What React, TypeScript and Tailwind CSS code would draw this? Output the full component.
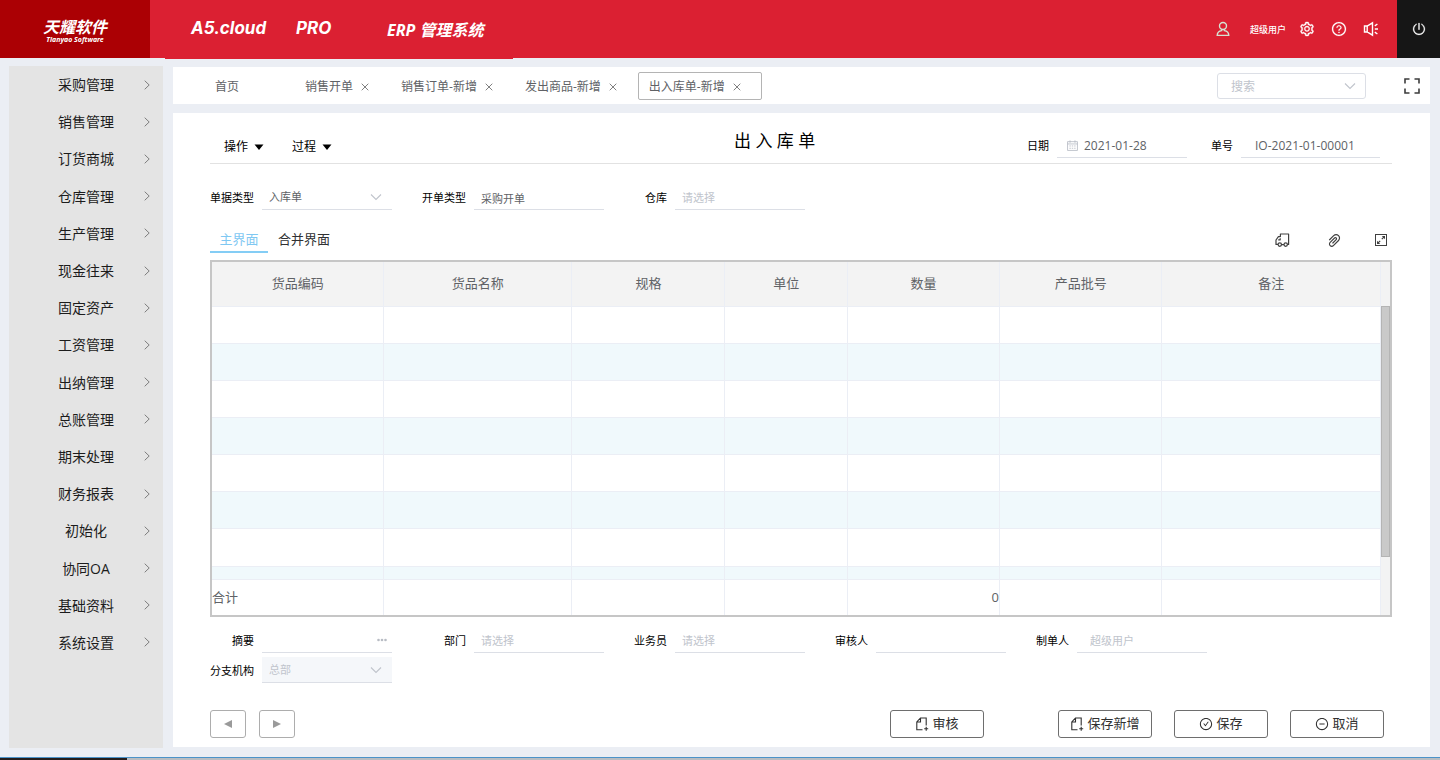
import type { ReactNode } from "react";
import {
  AiOutlineCheckCircle,
  AiOutlineMinusCircle,
  AiOutlinePaperClip,
  AiOutlinePoweroff,
  AiOutlineQuestionCircle,
  AiOutlineSetting,
} from "react-icons/ai";

const menuItems = [
  "采购管理",
  "销售管理",
  "订货商城",
  "仓库管理",
  "生产管理",
  "现金往来",
  "固定资产",
  "工资管理",
  "出纳管理",
  "总账管理",
  "期末处理",
  "财务报表",
  "初始化",
  "协同OA",
  "基础资料",
  "系统设置",
];

const openTabs = ["销售开单", "销售订单-新增", "发出商品-新增", "出入库单-新增"];

const columns = [
  { name: "货品编码", width: "w-[14.7%]" },
  { name: "货品名称", width: "w-[16.1%]" },
  { name: "规格", width: "w-[13.1%]" },
  { name: "单位", width: "w-[10.5%]" },
  { name: "数量", width: "w-[13%]" },
  { name: "产品批号", width: "w-[13.9%]" },
  { name: "备注", width: "" },
];

function Chevron({ className }: { className: string }) {
  return (
    <svg viewBox="0 0 12 12" className={className} fill="none" stroke="currentColor" strokeWidth="1.1" aria-hidden="true">
      <path d="M1 3.5 6 8.5 11 3.5" />
    </svg>
  );
}

function ArrowRight() {
  return (
    <svg viewBox="0 0 6 10" className="h-[10px] w-[6px] text-[#7d7d7d]" fill="none" stroke="currentColor" aria-hidden="true">
      <path d="M0.7 0.7 5.2 5 0.7 9.3" />
    </svg>
  );
}

function CloseIcon() {
  return (
    <svg viewBox="0 0 8 8" className="size-2 text-[#808080]" fill="none" stroke="currentColor" aria-hidden="true">
      <path d="M0.7 0.7 7.3 7.3M7.3 0.7 0.7 7.3" />
    </svg>
  );
}

function Triangle({ points, className }: { points: string; className: string }) {
  return (
    <svg viewBox="0 0 10 10" className={className} fill="currentColor" aria-hidden="true">
      <polygon points={points} />
    </svg>
  );
}

function UserIcon() {
  return (
    <svg viewBox="0 0 14 16" className="h-4 w-[14px] text-[#d5e3d3]" fill="none" stroke="currentColor" strokeWidth="1.4" aria-hidden="true">
      <circle cx="7" cy="5" r="3.5" />
      <path d="M5.6 8.4V9.6C2.6 10 1.3 11.6 1.2 14.4H12.8C12.7 11.6 11.4 10 8.4 9.6V8.4" />
    </svg>
  );
}

function SpeakerIcon() {
  return (
    <svg viewBox="0 0 16 16" className="size-4" fill="none" stroke="currentColor" strokeWidth="1.4" aria-hidden="true">
      <path d="M1.5 5H4.2L9.5 1.8V14.2L4.2 11H1.5ZM4.2 5V11M11.8 8H15M11.8 4.8 14.4 3M11.8 11.2 14.4 13" />
    </svg>
  );
}

function DocumentAddIcon() {
  return (
    <svg viewBox="0 0 14 14" className="size-[14px]" fill="none" stroke="currentColor" strokeWidth="1.1" aria-hidden="true">
      <path d="M7.5 12.8H1.8V5L5.5 1H11.2V8.5M5.5 1V5H1.8M11.2 9.8V13.8M9.2 11.8H13.2" />
    </svg>
  );
}

function TruckIcon() {
  return (
    <svg viewBox="0 0 15 14" className="h-[14px] w-[15px]" fill="none" stroke="currentColor" strokeWidth="1.2" strokeLinejoin="round" aria-hidden="true">
      <path d="M3 11.4H1V7L3.4 3.6H5.4V1H13.6V11.4H12.4M6.6 11.6H9M3.2 6.8H5.2V5.2" />
      <circle cx="4.8" cy="11.6" r="1.7" />
      <circle cx="10.7" cy="11.6" r="1.7" />
    </svg>
  );
}

function ExpandBoxIcon() {
  return (
    <svg viewBox="0 0 12 12" className="size-3" fill="none" stroke="currentColor" strokeWidth="1" aria-hidden="true">
      <rect x="0.5" y="0.5" width="11" height="11" />
      <path d="M2.6 9.4 5.2 6.8M6.8 5.2 9.4 2.6" strokeWidth="1.2" />
      <path d="M6.8 2H10V5.2ZM2 6.8V10H5.2Z" fill="currentColor" stroke="none" />
    </svg>
  );
}

function FullscreenIcon() {
  return (
    <svg viewBox="0 0 16 16" className="size-4" fill="none" stroke="currentColor" strokeWidth="1.6" aria-hidden="true">
      <path d="M1 5.5V1H5.5M10.5 1H15V5.5M15 10.5V15H10.5M5.5 15H1V10.5" />
    </svg>
  );
}

function CalendarIcon() {
  return (
    <svg viewBox="0 0 12 12" className="size-[11px] text-[#b5bac4]" fill="none" stroke="currentColor" strokeWidth="0.9" aria-hidden="true">
      <path d="M0.6 1.8H11.4V11.4H0.6ZM0.6 4.3H11.4M3.3 0.4V3M8.7 0.4V3M2.6 6.5H4.2M5.2 6.5H6.8M7.8 6.5H9.4M2.6 9H4.2M5.2 9H6.8M7.8 9H9.4" />
    </svg>
  );
}

type FieldProps = {
  id: string;
  label: string;
  labelClass: string;
  children: ReactNode;
};

function Field({ id, label, labelClass, children }: FieldProps) {
  return (
    <div className="flex items-center gap-2">
      <label htmlFor={id} className={`pt-[2px] text-right whitespace-nowrap text-black ${labelClass}`}>
        {label}
      </label>
      {children}
    </div>
  );
}

const inputClass =
  "h-[26px] w-[130px] rounded-none border-b border-[#dcdfe6] bg-transparent px-[7px] pt-[2px] text-[#606266] outline-none placeholder:text-[#c0c4cc]";

function ActionButton({ icon, children }: { icon: ReactNode; children: ReactNode }) {
  return (
    <button
      type="button"
      className="flex h-7 w-[94px] items-center justify-center gap-[3px] rounded-[3px] border border-[#6e6e6e] bg-white text-[13px] text-[#303030]"
    >
      {icon}
      {children}
    </button>
  );
}

function Header() {
  return (
    <header className="flex h-[58px] bg-[#db2032] text-white">
      <div className="flex w-[150px] flex-col items-center justify-center bg-[#ab0004] pt-[5px] font-['Noto_Sans','Noto_Sans_CJK_SC',sans-serif] font-bold italic">
        <span className="text-[16px] leading-[16px]">天耀软件</span>
        <span className="text-[7px] leading-[9px]">Tianyao Software</span>
      </div>
      <div className="ml-[15px] flex h-[59px] w-[348px] items-center bg-[#db2032] pl-[26px] font-bold italic">
        <span className="w-[105px] pb-[2px] font-['Inter',sans-serif] text-[17px]">A5.cloud</span>
        <span className="w-[91px] pb-[2px] font-['Inter',sans-serif] text-[17px]">PRO</span>
        <span className="font-['Noto_Sans','Noto_Sans_CJK_SC',sans-serif] text-[16px] whitespace-nowrap">ERP 管理系统</span>
      </div>
      <div className="ml-auto flex items-center">
        <button type="button" aria-label="用户">
          <UserIcon />
        </button>
        <span className="mr-[13px] ml-5 pt-px text-[9px] font-medium">超级用户</span>
        <div className="mr-[18px] flex gap-4 pb-px">
          <button type="button" aria-label="设置">
            <AiOutlineSetting className="size-4" strokeWidth={24} />
          </button>
          <button type="button" aria-label="帮助">
            <AiOutlineQuestionCircle className="size-4" strokeWidth={12} />
          </button>
          <button type="button" aria-label="通知">
            <SpeakerIcon />
          </button>
        </div>
        <button type="button" aria-label="退出" className="flex h-full w-[43px] items-center justify-center bg-[#161616]">
          <AiOutlinePoweroff className="size-[14px]" strokeWidth={20} />
        </button>
      </div>
    </header>
  );
}

function Sidebar() {
  return (
    <nav className="w-[154px] shrink-0 bg-[#e4e4e4]">
      <ul className="grid h-[595px] auto-rows-fr text-[14px] text-[#1c1c1c]">
        {menuItems.map((item) => (
          <li key={item}>
            <a href="#" className="grid h-full grid-cols-[1fr_auto_1fr] items-center">
              <span />
              <span>{item}</span>
              <span className="flex justify-end pr-[13px]">
                <ArrowRight />
              </span>
            </a>
          </li>
        ))}
      </ul>
    </nav>
  );
}

function TabBar() {
  return (
    <div className="flex h-[37px] items-center bg-white pl-[31px] text-[12px] text-[#606266]">
      <a href="#" className="w-[90px] pt-[2px] pl-[11px]">
        首页
      </a>
      {openTabs.map((tab, index) => {
        const active = index === openTabs.length - 1;
        return (
          <div
            key={tab}
            className={`flex h-7 items-center gap-2 rounded-[2px] border pt-[2px] pr-5 pl-[10px] ${
              active ? "border-[#b4b4b4]" : "border-transparent"
            }`}
          >
            <a href="#" className="whitespace-nowrap">
              {tab}
            </a>
            <button type="button" aria-label={`关闭${tab}`}>
              <CloseIcon />
            </button>
          </div>
        );
      })}
      <div className="relative mr-[38px] ml-auto">
        <input
          aria-label="搜索"
          placeholder="搜索"
          className="h-[26px] w-[149px] rounded-[3px] border border-[#dcdfe6] bg-white px-[13px] pt-px outline-none placeholder:text-[#c0c4cc]"
        />
        <Chevron className="absolute top-[7px] right-[10px] size-3 text-[#c0c4cc]" />
      </div>
      <button type="button" aria-label="全屏" className="mr-[10px] text-[#3c3c3c]">
        <FullscreenIcon />
      </button>
    </div>
  );
}

function FormHeader() {
  return (
    <div className="flex h-[51px] items-center border-b border-[#e2e2e2] pt-[14px]">
      <div className="flex w-[524px] gap-7 pt-[3px] pl-[14px] text-[12px] text-black">
        <button type="button" className="flex items-center gap-[6px]">
          操作
          <Triangle points="0.5,2.5 9.5,2.5 5,8" className="size-[10px]" />
        </button>
        <button type="button" className="flex items-center gap-[6px]">
          过程
          <Triangle points="0.5,2.5 9.5,2.5 5,8" className="size-[10px]" />
        </button>
      </div>
      <h1 className="pb-2 text-[17px] whitespace-nowrap text-black">出 入 库 单</h1>
      <div className="mr-3 ml-auto flex gap-6 text-[11px]">
        <Field id="date" label="日期" labelClass="">
          <div className="flex h-[26px] w-[130px] items-center gap-[6px] border-b border-[#dcdfe6] pt-[2px] pl-[10px]">
            <CalendarIcon />
            <input id="date" defaultValue="2021-01-28" className="w-[90px] text-[12px] text-[#606266] outline-none" />
          </div>
        </Field>
        <Field id="number" label="单号" labelClass="">
          <input
            id="number"
            defaultValue="IO-2021-01-00001"
            className="h-[26px] w-[139px] border-b border-[#dcdfe6] pt-[2px] pl-[14px] text-[12px] text-[#606266] outline-none"
          />
        </Field>
      </div>
    </div>
  );
}

function ItemsTable() {
  return (
    <div className="flex border-2 border-[#c6c6c6]">
      <table className="h-[353px] flex-1 table-fixed border-collapse text-[13px] text-[#606266]">
        <thead>
          <tr className="h-11 bg-[#f3f3f3]">
            {columns.map((column) => (
              <th key={column.name} className={`border-r border-b border-[#ebeef5] p-0 font-normal ${column.width}`}>
                {column.name}
              </th>
            ))}
          </tr>
        </thead>
        <tbody>
          {[0, 1, 2, 3, 4, 5, 6, 7].map((row) => (
            <tr key={row} className={`${row % 2 ? "bg-[#f0f9fc]" : "bg-white"} ${row === 7 ? "h-[13px]" : ""}`}>
              {columns.map((column) => (
                <td key={column.name} className="border-r border-b border-[#ebeef5] p-0" />
              ))}
            </tr>
          ))}
        </tbody>
        <tfoot>
          <tr className="h-9">
            <td className="border-r border-[#ebeef5] p-0">合计</td>
            <td className="border-r border-[#ebeef5]" />
            <td className="border-r border-[#ebeef5]" />
            <td className="border-r border-[#ebeef5]" />
            <td className="border-r border-[#ebeef5] p-0 text-right">0</td>
            <td className="border-r border-[#ebeef5]" />
            <td className="border-r border-[#ebeef5]" />
          </tr>
        </tfoot>
      </table>
      <div className="w-[9px] bg-[#f3f3f3] pt-11">
        <div className="h-[251px] border border-[#b4b4b4] bg-[#c9c9c9]" />
      </div>
    </div>
  );
}

function DocumentForm() {
  return (
    <main className="flex flex-1 flex-col bg-white pr-[38px] pb-[9px] pl-[37px]">
      <FormHeader />
      <div className="mt-5 flex text-[11px]">
        <Field id="doc-type" label="单据类型" labelClass="w-[44px]">
          <div className="relative">
            <select id="doc-type" className={`appearance-none ${inputClass}`}>
              <option>入库单</option>
            </select>
            <Chevron className="absolute top-[7px] right-[10px] size-3 text-[#c0c4cc]" />
          </div>
        </Field>
        <Field id="bill-type" label="开单类型" labelClass="w-[74px]">
          <input id="bill-type" defaultValue="采购开单" className={inputClass} />
        </Field>
        <Field id="warehouse" label="仓库" labelClass="w-[63px]">
          <input id="warehouse" placeholder="请选择" className={inputClass} />
        </Field>
      </div>

      <div className="mt-[17px] mb-[7px] flex h-[26px] items-center text-[13px]">
        <button type="button" className="h-full w-[58px] border-b-2 border-[#84cdf5] pt-[2px] text-[#7fc8f2]">
          主界面
        </button>
        <button type="button" className="ml-[10px] text-[#303133]">
          合并界面
        </button>
        <div className="mr-[5px] ml-auto flex items-center text-[#404040]">
          <button type="button" aria-label="物流" className="mr-9">
            <TruckIcon />
          </button>
          <button type="button" aria-label="附件" className="mr-8">
            <AiOutlinePaperClip className="size-[17px]" />
          </button>
          <button type="button" aria-label="放大">
            <ExpandBoxIcon />
          </button>
        </div>
      </div>

      <ItemsTable />

      <div className="mt-[10px] flex text-[11px]">
        <Field id="summary" label="摘要" labelClass="w-[44px]">
          <div className="relative">
            <input id="summary" className={inputClass} />
            <svg viewBox="0 0 10 4" className="absolute top-[11px] right-[5px] h-1 w-[10px] text-[#b8bcc4]" fill="currentColor" aria-hidden="true">
              <circle cx="1.5" cy="2" r="1.3" />
              <circle cx="5" cy="2" r="1.3" />
              <circle cx="8.5" cy="2" r="1.3" />
            </svg>
          </div>
        </Field>
        <Field id="department" label="部门" labelClass="w-[74px]">
          <input id="department" placeholder="请选择" className={inputClass} />
        </Field>
        <Field id="salesman" label="业务员" labelClass="w-[63px]">
          <input id="salesman" placeholder="请选择" className={inputClass} />
        </Field>
        <Field id="auditor" label="审核人" labelClass="w-[63px]">
          <input id="auditor" className={inputClass} />
        </Field>
        <Field id="creator" label="制单人" labelClass="w-[63px]">
          <input
            id="creator"
            placeholder="超级用户"
            className="h-[26px] w-[130px] border-b border-[#dcdfe6] px-[13px] pt-[2px] outline-none placeholder:text-[#c0c4cc]"
          />
        </Field>
      </div>
      <div className="mt-1 flex text-[11px]">
        <Field id="branch" label="分支机构" labelClass="w-[44px]">
          <div className="relative bg-[#f5f7fa]">
            <select
              id="branch"
              disabled
              className="h-[26px] w-[130px] appearance-none rounded-none border-b border-[#dcdfe6] px-[7px] pt-[2px] text-[#c0c4cc] opacity-100"
            >
              <option>总部</option>
            </select>
            <Chevron className="absolute top-[7px] right-[10px] size-3 text-[#c0c4cc]" />
          </div>
        </Field>
      </div>

      <div className="mt-auto flex pt-4">
        <button
          type="button"
          aria-label="上一张"
          className="flex h-7 w-9 items-center justify-center rounded-[3px] border border-[#adadad] text-[#9a9a9a]"
        >
          <Triangle points="1,5 9,1 9,9" className="size-[10px]" />
        </button>
        <button
          type="button"
          aria-label="下一张"
          className="ml-[13px] flex h-7 w-9 items-center justify-center rounded-[3px] border border-[#adadad] text-[#9a9a9a]"
        >
          <Triangle points="9,5 1,1 1,9" className="size-[10px]" />
        </button>
        <div className="mr-2 ml-auto flex gap-[22px]">
          <div className="mr-[52px]">
            <ActionButton icon={<DocumentAddIcon />}>审核</ActionButton>
          </div>
          <ActionButton icon={<DocumentAddIcon />}>保存新增</ActionButton>
          <ActionButton icon={<AiOutlineCheckCircle className="size-[14px]" />}>保存</ActionButton>
          <ActionButton icon={<AiOutlineMinusCircle className="size-[14px]" />}>取消</ActionButton>
        </div>
      </div>
    </main>
  );
}

export default function App() {
  return (
    <div className="flex min-h-screen flex-col bg-[#ebeef4] font-['Open_Sans','Noto_Sans_CJK_SC',sans-serif]">
      <Header />
      <div className="flex flex-1 gap-[10px] pt-2 pr-[10px] pb-[9px] pl-[9px]">
        <Sidebar />
        <div className="flex min-w-0 flex-1 flex-col gap-[9px] py-px">
          <TabBar />
          <DocumentForm />
        </div>
      </div>
      <div className="flex h-[3px] border-t border-[#4b93c9] bg-[#b9bdc2]">
        <div className="w-[127px] bg-[#231c1c]" />
      </div>
    </div>
  );
}
